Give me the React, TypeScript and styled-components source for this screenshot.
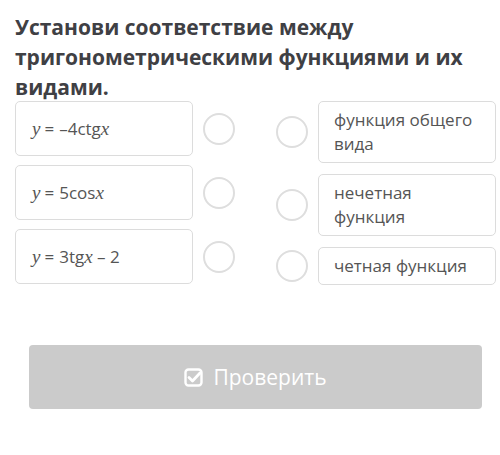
import React from 'react';
import styled, { createGlobalStyle } from 'styled-components';

const GlobalStyle = createGlobalStyle`
    body {
        margin: 0;
        background: #ffffff;
        font-family: "Open Sans", "Liberation Sans", sans-serif;
    }
`;

const Page = styled.div`
    width: 500px;
    height: 455px;
    padding: 12px 4px 0 15px;
    box-sizing: border-box;
`;

const Title = styled.h1`
    margin: 0;
    font-size: 21px;
    line-height: 30px;
    font-weight: 700;
    color: #3f4044;
`;

const Board = styled.div`
    display: flex;
    justify-content: space-between;
    align-items: flex-start;
    margin-top: -1px;
    width: 481px;
`;

const Column = styled.div<{ $gap: number }>`
    display: flex;
    flex-direction: column;
    gap: ${p => p.$gap}px;
`;

const Row = styled.div`
    display: flex;
    align-items: center;
    gap: 10px;
`;

const Card = styled.div<{ $tall?: boolean }>`
    width: 178px;
    box-sizing: border-box;
    min-height: ${p => (p.$tall ? '55px' : '37px')};
    display: flex;
    align-items: center;
    padding: ${p => (p.$tall ? '6px 10px 6px 16px' : '6px 20px 6px 15px')};
    border: 1px solid #dcdcdc;
    border-radius: 5px;
    font-size: 17px;
    line-height: 24px;
    color: #555555;
`;

const Radio = styled.span`
    width: 28px;
    height: 28px;
    flex-shrink: 0;
    border: 2px solid #dedede;
    border-radius: 50%;
`;

const Var = styled.i`
    font-family: "Liberation Serif", "DejaVu Serif", serif;
    font-size: 19px;
`;

const Eq = styled.span`
    margin: 0 5px 0 4px;
`;

const CheckButton = styled.button`
    display: flex;
    align-items: center;
    justify-content: center;
    gap: 9px;
    width: 453px;
    height: 64px;
    margin: 60px 0 0 14px;
    border: none;
    border-radius: 4px;
    background: #cbcbcb;
    color: #ffffff;
    font-family: "Open Sans", "Liberation Sans", sans-serif;
    font-size: 21px;
`;

const CheckIcon = () => (
    <svg width="20" height="20" viewBox="0 0 20 20" fill="none">
        <rect x="1.5" y="2.5" width="16" height="16" rx="3" stroke="#fff" strokeWidth="2.4" />
        <path d="M5 10.5 L8.5 14 L16 6" stroke="#fff" strokeWidth="2.8" strokeLinecap="round" strokeLinejoin="round" />
    </svg>
);

const formulas = [
    <>
        <Var>y</Var><Eq>=</Eq>–4ctg<Var>x</Var>
    </>,
    <>
        <Var>y</Var><Eq>=</Eq>5cos<Var>x</Var>
    </>,
    <>
        <Var>y</Var><Eq>=</Eq>3tg<Var>x</Var>&nbsp;– 2
    </>,
];

const kinds = ['функция общего вида', 'нечетная функция', 'четная функция'];

const App: React.FC = () => (
    <Page>
        <GlobalStyle />
        <Title>Установи соответствие между тригонометрическими функциями и их видами.</Title>
        <Board>
            <Column $gap={9}>
                {formulas.map((f, i) => (
                    <Row key={i}>
                        <Card $tall>{f}</Card>
                        <Radio />
                    </Row>
                ))}
            </Column>
            <Column $gap={11}>
                {kinds.map(k => (
                    <Row key={k}>
                        <Radio />
                        <Card>{k}</Card>
                    </Row>
                ))}
            </Column>
        </Board>
        <CheckButton>
            <CheckIcon />
            Проверить
        </CheckButton>
    </Page>
);

export default App;
